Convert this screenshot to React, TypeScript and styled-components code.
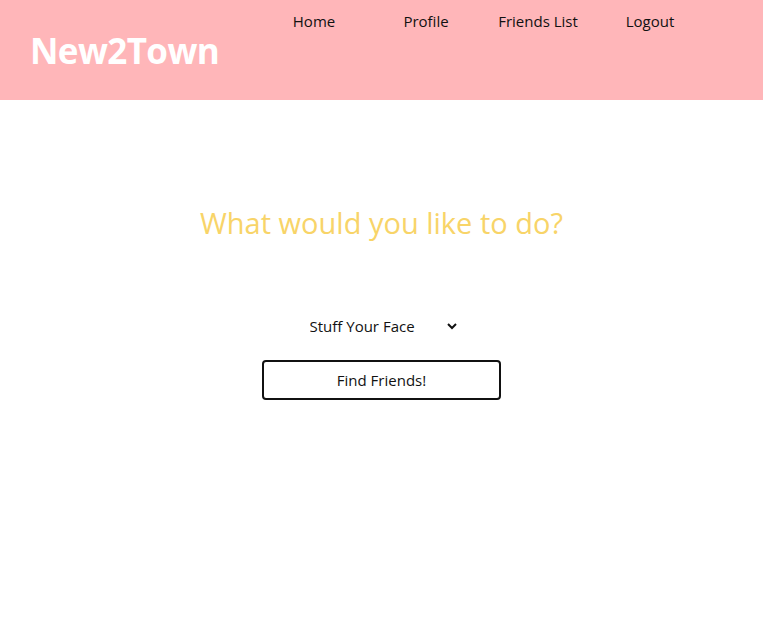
import React from "react";
import styled, { createGlobalStyle } from "styled-components";

const Global = createGlobalStyle`
  html, body { margin: 0; padding: 0; background: #fff; }
  body { font-family: "Open Sans", "Noto Sans", sans-serif; }
`;

const Header = styled.header`
  height: 100px;
  background: #ffb6b9;
  display: flex;
  align-items: flex-start;
  box-sizing: border-box;
`;

const Logo = styled.h1`
  margin: 0;
  padding: 29px 0 0 30px;
  width: 228px;
  color: #fff;
  font-family: "Open Sans", sans-serif;
  font-weight: 700;
  font-size: 35px;
  line-height: 44px;
  letter-spacing: -0.6px;
`;

const Nav = styled.nav`
  display: flex;
  padding-top: 10px;
`;

const NavLink = styled.a`
  width: 112px;
  text-align: center;
  color: #111;
  font-size: 15px;
  line-height: 22px;
  text-decoration: none;
  cursor: pointer;
`;

const Main = styled.main`
  display: flex;
  flex-direction: column;
  align-items: center;
  padding-top: 103px;
`;

const Heading = styled.h2`
  margin: 0;
  color: #f8d468;
  font-weight: 400;
  font-size: 29px;
  line-height: 40px;
`;

const Select = styled.select`
  margin-top: 70px;
  width: 156px;
  border: none;
  background: transparent;
  font-family: "Open Sans", sans-serif;
  font-size: 15px;
  color: #111;
  padding: 2px 2px 2px 2px;
  outline: none;
`;

const Button = styled.button`
  margin-top: 21px;
  width: 239px;
  height: 40px;
  background: #fff;
  border: 2px solid #111;
  border-radius: 4px;
  font-family: "Open Sans", sans-serif;
  font-size: 15px;
  color: #111;
  cursor: pointer;
`;

export default function App() {
  return (
    <>
      <Global />
      <Header>
        <Logo>New2Town</Logo>
        <Nav>
          <NavLink>Home</NavLink>
          <NavLink>Profile</NavLink>
          <NavLink>Friends List</NavLink>
          <NavLink>Logout</NavLink>
        </Nav>
      </Header>
      <Main>
        <Heading>What would you like to do?</Heading>
        <Select defaultValue="food">
          <option value="food">Stuff Your Face</option>
          <option value="drink">Grab a Drink</option>
          <option value="outdoors">Get Outside</option>
        </Select>
        <Button>Find Friends!</Button>
      </Main>
    </>
  );
}
